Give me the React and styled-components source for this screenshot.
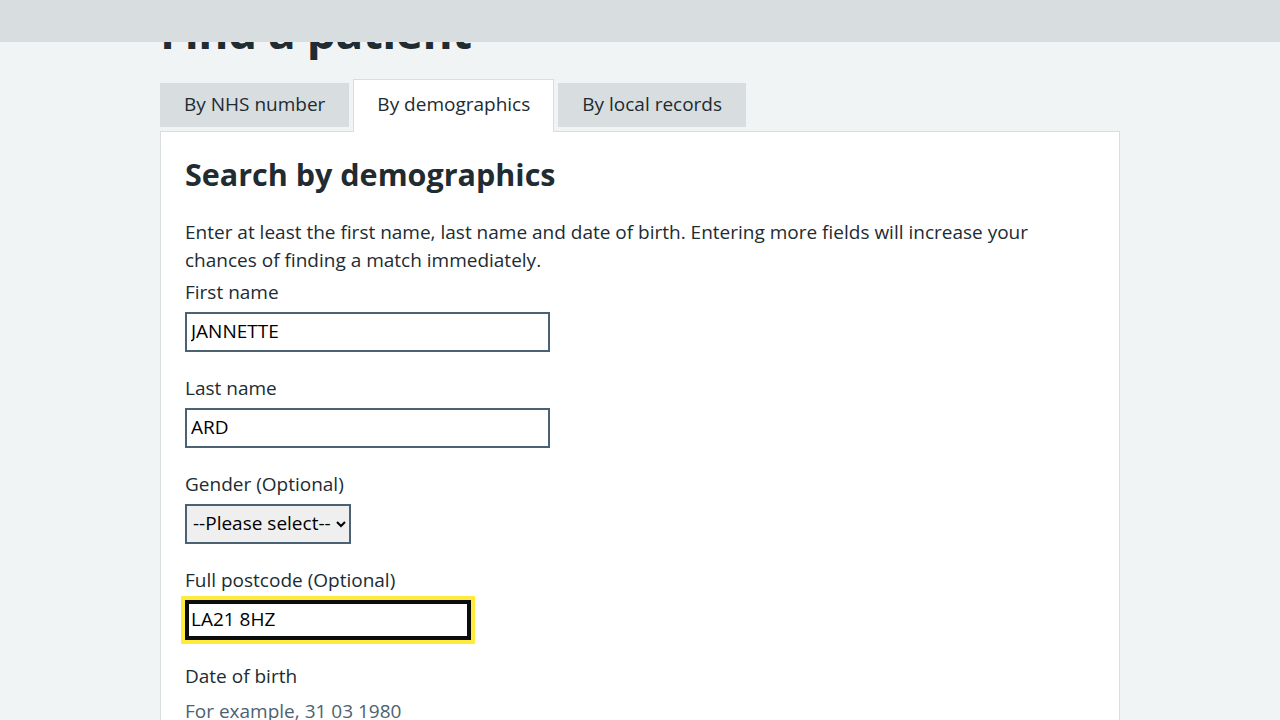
import React from "react";
import styled, { createGlobalStyle } from "styled-components";

const GlobalStyle = createGlobalStyle`
  html, body {
    margin: 0;
    padding: 0;
    background: #f0f4f5;
    color: #212b32;
    font-family: "Open Sans", "Noto Sans", Arial, sans-serif;
  }
  * { box-sizing: border-box; }
`;

const Header = styled.header`
  position: fixed;
  top: 0;
  left: 0;
  right: 0;
  height: 42px;
  background: #d8dde0;
  z-index: 10;
`;

const Main = styled.main`
  width: 960px;
  margin: 0 auto;
  padding-top: 3px;
`;

const PageTitle = styled.h1`
  font-size: 46px;
  line-height: 56px;
  font-weight: 700;
  margin: 0 0 20px;
  letter-spacing: -0.5px;
`;

const TabList = styled.div`
  display: flex;
  align-items: flex-end;
  gap: 4px;
`;

const Tab = styled.div`
  font-size: 19px;
  line-height: 24px;
  white-space: nowrap;
  color: #212b32;
  background: ${(p) => (p.$active ? "#ffffff" : "#d8dde0")};
  border: ${(p) => (p.$active ? "1px solid #d8dde0" : "none")};
  border-bottom: none;
  padding: ${(p) => (p.$active ? "12px 23px 16px" : "9px 24px 11px")};
  margin-bottom: ${(p) => (p.$active ? "-1px" : "4px")};
  position: relative;
  z-index: ${(p) => (p.$active ? 1 : 0)};
`;

const Panel = styled.section`
  background: #ffffff;
  border: 1px solid #d8dde0;
  padding: 22px 24px 40px;
  min-height: 700px;
`;

const PanelTitle = styled.h2`
  font-size: 30.5px;
  line-height: 40px;
  font-weight: 700;
  margin: 0 0 24px;
`;

const Lead = styled.p`
  font-size: 19px;
  line-height: 28px;
  margin: 0 0 4px;
`;

const FormGroup = styled.div`
  display: flex;
  flex-direction: column;
  align-items: flex-start;
  margin-bottom: 22px;
`;

const Label = styled.label`
  font-size: 19px;
  line-height: 28px;
  margin-bottom: 6px;
`;

const Hint = styled.div`
  font-size: 19px;
  line-height: 28px;
  color: #4c6272;
  margin-top: 1px;
`;

const TextInput = styled.input`
  width: ${(p) => p.$width}px;
  height: 40px;
  padding: 0 4px 3px;
  font-family: "Open Sans", "Noto Sans", Arial, sans-serif;
  font-size: 19px;
  color: #000000;
  background: #ffffff;
  border: 2px solid ${(p) => (p.$focused ? "#0b0c0c" : "#4c6272")};
  border-radius: 0;
  outline: ${(p) => (p.$focused ? "4px solid #ffeb3b" : "none")};
  outline-offset: 0;
  box-shadow: ${(p) => (p.$focused ? "inset 0 0 0 2px #0b0c0c" : "none")};
`;

const Select = styled.select`
  height: 40px;
  padding: 0 2px 2px;
  font-family: "Open Sans", "Noto Sans", Arial, sans-serif;
  font-size: 19px;
  color: #000000;
  background: #efefef;
  border: 2px solid #4c6272;
  border-radius: 0;
`;

export default function App() {
  return (
    <>
      <GlobalStyle />
      <Header />
      <Main>
        <PageTitle>Find a patient</PageTitle>
        <TabList>
          <Tab>By NHS number</Tab>
          <Tab $active>By demographics</Tab>
          <Tab>By local records</Tab>
        </TabList>
        <Panel>
          <PanelTitle>Search by demographics</PanelTitle>
          <Lead>
            Enter at least the first name, last name and date of birth. Entering more fields will
            increase your chances of finding a match immediately.
          </Lead>
          <FormGroup>
            <Label htmlFor="first-name">First name</Label>
            <TextInput id="first-name" $width={365} defaultValue="JANNETTE" />
          </FormGroup>
          <FormGroup>
            <Label htmlFor="last-name">Last name</Label>
            <TextInput id="last-name" $width={365} defaultValue="ARD" />
          </FormGroup>
          <FormGroup>
            <Label htmlFor="gender">Gender (Optional)</Label>
            <Select id="gender" defaultValue="">
              <option value="">--Please select--</option>
              <option value="female">Female</option>
              <option value="male">Male</option>
            </Select>
          </FormGroup>
          <FormGroup>
            <Label htmlFor="postcode">Full postcode (Optional)</Label>
            <TextInput id="postcode" $width={286} $focused defaultValue="LA21 8HZ" />
          </FormGroup>
          <FormGroup>
            <Label>Date of birth</Label>
            <Hint>For example, 31 03 1980</Hint>
          </FormGroup>
        </Panel>
      </Main>
    </>
  );
}
